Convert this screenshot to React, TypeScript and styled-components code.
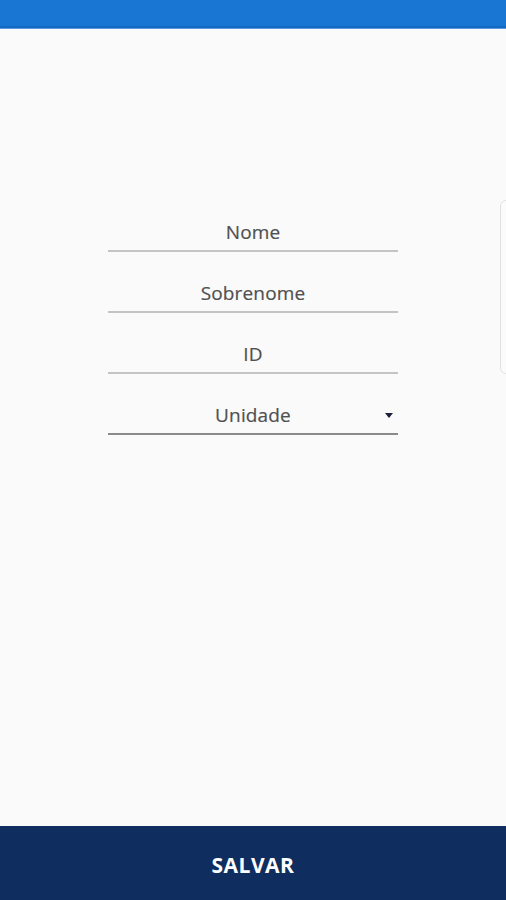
import React from 'react';
import styled, { createGlobalStyle } from 'styled-components';

const GlobalStyle = createGlobalStyle`
  html, body {
    margin: 0;
    padding: 0;
    height: 100%;
    background: #fafafa;
    font-family: "Open Sans", "Noto Sans", sans-serif;
  }
  #root {
    height: 100%;
  }
`;

const Screen = styled.div`
  position: relative;
  display: flex;
  flex-direction: column;
  height: 900px;
  overflow: hidden;
  background: #fafafa;
`;

const StatusBar = styled.div`
  height: 28px;
  flex-shrink: 0;
  background: #1976d2;
  border-bottom: 1px solid #5a9ae0;
  box-shadow: inset 0 -2px 0 #1569c4;
`;

const Content = styled.main`
  flex: 1;
  display: flex;
  flex-direction: column;
  align-items: center;
  padding-top: 164px;
`;

const Form = styled.form`
  width: 290px;
  display: flex;
  flex-direction: column;
`;

const Field = styled.div<{ $dark?: boolean }>`
  position: relative;
  height: 59px;
  display: flex;
  align-items: flex-end;
  justify-content: center;
  padding-bottom: 5px;
  box-sizing: border-box;
  border-bottom: 2px solid ${p => (p.$dark ? '#8a8a8a' : '#c4c4c4')};
  & + & {
    margin-top: 2px;
  }
`;

const Label = styled.span`
  font-size: 19px;
  line-height: 26px;
  color: #505050;
  letter-spacing: 0.15px;
  -webkit-text-stroke: 0.2px #505050;
`;

const Caret = styled.span`
  position: absolute;
  right: 5px;
  bottom: 15px;
  width: 0;
  height: 0;
  border-left: 4px solid transparent;
  border-right: 4px solid transparent;
  border-top: 5px solid #1b1f3a;
`;

const EdgeHandle = styled.div`
  position: absolute;
  top: 200px;
  left: 500px;
  width: 20px;
  height: 172px;
  border: 1px solid #e2e2e2;
  border-radius: 6px;
  background: #fbfbfb;
`;

const SaveBar = styled.button`
  height: 74px;
  flex-shrink: 0;
  border: none;
  background: #0f2d5f;
  color: #ffffff;
  font-family: "Open Sans", "Noto Sans", sans-serif;
  font-weight: 700;
  font-size: 21px;
  letter-spacing: 0.5px;
  display: flex;
  align-items: center;
  justify-content: center;
  padding: 4px 0 0;
`;

const fields = ['Nome', 'Sobrenome', 'ID'];

export default function App() {
  return (
    <Screen>
      <GlobalStyle />
      <StatusBar />
      <Content>
        <Form>
          {fields.map(f => (
            <Field key={f}>
              <Label>{f}</Label>
            </Field>
          ))}
          <Field $dark>
            <Label>Unidade</Label>
            <Caret />
          </Field>
        </Form>
      </Content>
      <SaveBar type="button">SALVAR</SaveBar>
      <EdgeHandle />
    </Screen>
  );
}
